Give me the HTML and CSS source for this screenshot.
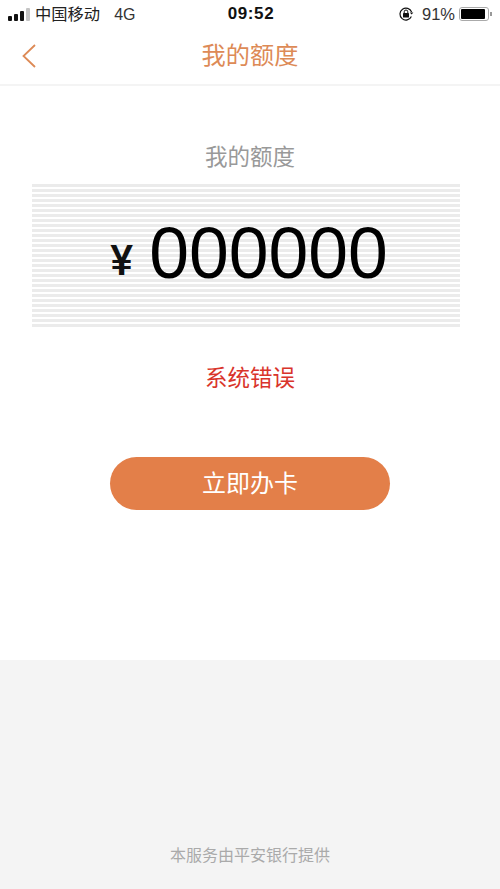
FILE: index.html
```html
<!DOCTYPE html>
<html lang="zh-CN">
  <head>
    <meta charset="UTF-8" />
    <meta name="viewport" content="width=device-width, initial-scale=1.0" />
    <title>我的额度</title>
    <link rel="stylesheet" href="styles.css">
  </head>
  <body>
    <div class="page">
      <div class="status-bar">
        <div class="status-left">
          <div class="signal">
            <span class="bar bar-1"></span>
            <span class="bar bar-2"></span>
            <span class="bar bar-3"></span>
            <span class="bar bar-4"></span>
          </div>
          <span class="carrier">中国移动</span>
          <span class="network">4G</span>
        </div>
        <div class="status-time">09:52</div>
        <div class="status-right">
          <svg class="lock-icon" width="16" height="16" viewBox="0 0 16 16">
            <path d="M13.4 10.6A6 6 0 1 1 13.6 6" fill="none" stroke="#111" stroke-width="1.2" />
            <path d="M11.8 6.4 L15.4 6.4 L13.6 8.6 Z" fill="#111" />
            <rect x="5" y="7" width="6" height="4.6" rx="0.6" fill="#111" />
            <path d="M6.2 7V5.8a1.8 1.8 0 0 1 3.6 0V7" fill="none" stroke="#111" stroke-width="1" />
          </svg>
          <span class="battery-text">91%</span>
          <div class="battery">
            <div class="battery-level"></div>
          </div>
          <span class="battery-tip"></span>
        </div>
      </div>

      <div class="nav-bar">
        <svg class="back-icon" width="16" height="26" viewBox="0 0 16 26">
          <path d="M14 2 L2.5 13 L14 24" fill="none" stroke="#dd8a56" stroke-width="1.8" />
        </svg>
        <div class="nav-title">我的额度</div>
      </div>

      <div class="content">
        <div class="quota-label">我的额度</div>
        <div class="quota-box">
          <span class="yen">¥</span>
          <span class="amount">000000</span>
        </div>
        <div class="error-text">系统错误</div>
        <button class="apply-btn">立即办卡</button>
      </div>

      <div class="footer">
        <div class="footer-text">本服务由平安银行提供</div>
      </div>
    </div>
  </body>
</html>
```

FILE: styles.css
```css
body {
  margin: 0;
  padding: 0;
  background-color: #fff;
  font-family: "Liberation Sans", "Noto Sans CJK SC", sans-serif;
}

.page {
  display: flex;
  flex-direction: column;
  width: 500px;
  height: 889px;
  overflow: hidden;
}

.status-bar {
  display: grid;
  grid-template-columns: 1fr auto 1fr;
  align-items: center;
  height: 28px;
  padding: 0 8px;
  color: #222;
  font-size: 16px;
}

.status-left {
  display: flex;
  align-items: center;
}

.signal {
  display: flex;
  align-items: flex-end;
  gap: 2px;
  height: 13px;
  margin-right: 5px;
}

.bar {
  width: 4px;
  background-color: #111;
  border-radius: 1px;
}

.bar-1 {
  height: 5px;
}

.bar-2 {
  height: 7px;
}

.bar-3 {
  height: 10px;
}

.bar-4 {
  height: 13px;
  background-color: #c4c4c4;
}

.carrier {
  margin-right: 14px;
  font-size: 16.3px;
  line-height: 20px;
}

.network {
  padding-top: 1px;
  line-height: 20px;
  color: #333;
}

.status-time {
  margin-left: 2px;
  font-weight: bold;
  font-size: 17px;
  letter-spacing: 0.6px;
  color: #111;
}

.status-right {
  display: flex;
  align-items: center;
  justify-content: flex-end;
}

.lock-icon {
  margin-right: 8px;
}

.battery-text {
  margin-right: 4px;
  font-size: 16.5px;
  color: #333;
}

.battery {
  width: 26px;
  height: 10px;
  padding: 1px;
  border: 1px solid #aaa;
  border-radius: 3px;
}

.battery-level {
  width: 94%;
  height: 100%;
  background-color: #000;
  border-radius: 1px;
}

.battery-tip {
  width: 2px;
  height: 4px;
  margin-left: 1px;
  background-color: #999;
}

.nav-bar {
  position: relative;
  display: flex;
  align-items: center;
  justify-content: center;
  height: 56px;
  border-bottom: 2px solid #f4f4f4;
}

.back-icon {
  position: absolute;
  left: 21px;
  top: 15px;
}

.nav-title {
  margin-bottom: 6px;
  font-size: 24.2px;
  color: #dd8a56;
}

.content {
  display: flex;
  flex-direction: column;
  align-items: center;
  flex-grow: 1;
}

.quota-label {
  margin-top: 57px;
  font-size: 22.5px;
  line-height: 30px;
  color: #999;
}

.quota-box {
  display: flex;
  align-items: center;
  justify-content: center;
  box-sizing: border-box;
  width: 428px;
  height: 145px;
  margin-top: 11px;
  margin-right: 8px;
  padding-left: 6px;
  padding-bottom: 7px;
  background-image: repeating-linear-gradient(to bottom, #ebebeb 0, #ebebeb 3px, #fff 3px, #fff 5px);
}

.yen {
  margin-right: 16px;
  margin-top: 14px;
  font-family: Roboto, sans-serif;
  font-size: 43px;
  font-weight: 500;
  color: #111;
}

.amount {
  font-size: 71.5px;
  color: #000;
}

.error-text {
  margin-top: 35px;
  font-size: 22.5px;
  line-height: 30px;
  color: #d9342b;
}

.apply-btn {
  width: 280px;
  height: 53px;
  margin-top: 63px;
  padding-bottom: 5px;
  border: none;
  border-radius: 27px;
  background-color: #e37f49;
  color: #fff;
  font-family: inherit;
  font-size: 24px;
}

.footer {
  display: flex;
  align-items: flex-end;
  justify-content: center;
  height: 229px;
  background-color: #f4f4f4;
}

.footer-text {
  margin-bottom: 23px;
  font-size: 16px;
  color: #aaa;
}
```
